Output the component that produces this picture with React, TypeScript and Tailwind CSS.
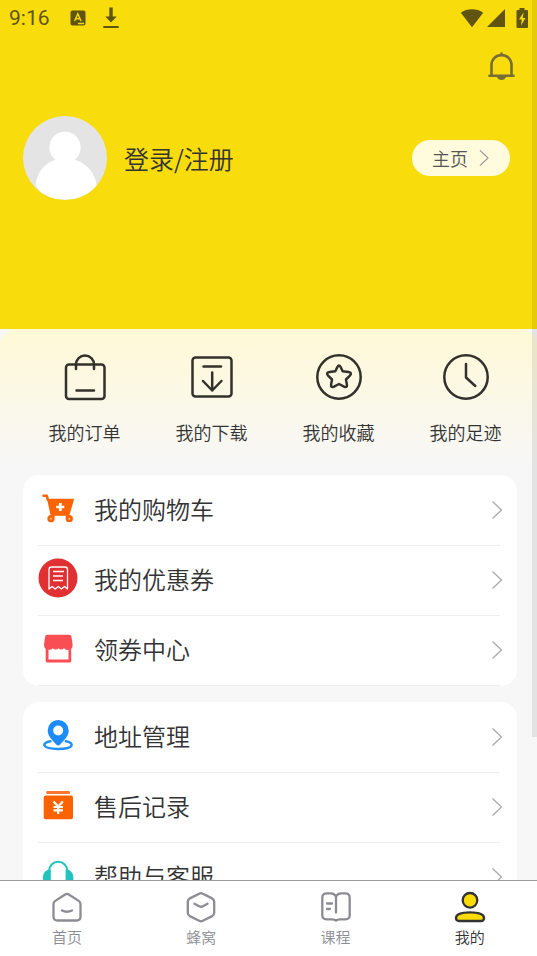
import type { ReactNode } from "react";

function Chevron({ className }: { className: string }) {
  return (
    <svg viewBox="0 0 12 20" className={className} fill="none" stroke="currentColor" strokeWidth="1.3" aria-hidden="true">
      <path d="M1.5 1.5 10.5 10 1.5 18.5" />
    </svg>
  );
}

function StatusBar() {
  return (
    <div className="flex h-9 items-center justify-between pl-[9px] pr-[9px] text-[#5f5511]">
      <div className="flex items-center">
        <span className="font-[Roboto,sans-serif] text-[21px] font-normal leading-9">9:16</span>
        <svg viewBox="0 0 16 16" className="ml-5 h-4 w-4" aria-hidden="true">
          <rect x="0.5" y="0.5" width="15" height="15" rx="2" fill="currentColor" />
          <path d="M4.6 11 7.8 3.8 11 11M5.8 8.8h4M8 13.6h6" fill="none" stroke="#f2d80c" strokeWidth="1.5" />
        </svg>
        <svg viewBox="0 0 16 22" className="ml-[17px] h-[22px] w-4" fill="currentColor" aria-hidden="true">
          <path d="M6.3 0.5h3.4v9h4L8 15.4 2.3 9.500h4zM0.300 19h15.400v2H0.300z" />
        </svg>
      </div>
      <div className="flex items-center">
        <svg viewBox="0 0 24 20" className="h-5 w-6" fill="currentColor" aria-hidden="true">
          <path d="M12 19.200 0.800 4.700C4 2.300 7.800 1.200 12 1.200s8 1.100 11.200 3.500z" />
        </svg>
        <svg viewBox="0 0 18 18" className="ml-[3px] h-[18px] w-[18px]" fill="currentColor" aria-hidden="true">
          <path d="M18 0v18H0z" />
        </svg>
        <svg viewBox="0 0 12 20" className="ml-[11px] h-5 w-3" aria-hidden="true">
          <path d="M3.500 0h5v2H11a1 1 0 0 1 1 1v16a1 1 0 0 1-1 1H1.500a1 1 0 0 1-1-1V3a1 1 0 0 1 1-1h2z" fill="currentColor" />
          <path d="M7.500 4.500 3 11.500h2.800L5 17.500l4.500-7.500H6.700z" fill="#f9dc0c" />
        </svg>
      </div>
    </div>
  );
}

function Avatar() {
  return (
    <svg viewBox="0 0 84 84" className="h-[84px] w-[84px] shrink-0 rounded-full bg-[#e4e4e4]" aria-hidden="true">
      <path
        d="M42 15.500a16 16 0 0 1 10 28.300C65 48 72.500 58 74 71L62 83.500H22L12.500 69C14 57 21 47.500 32 43.800a16 16 0 0 1 10-28.300z"
        fill="#fff"
      />
    </svg>
  );
}

const shortcuts: { label: string; icon: ReactNode }[] = [
  {
    label: "我的订单",
    icon: (
      <>
        <rect x="5" y="11.500" width="38.500" height="34.500" rx="3" />
        <path d="M15 16v-4.500a9 9 0 0 1 18 0V16M15.500 37.500h17.500" />
      </>
    ),
  },
  {
    label: "我的下载",
    icon: (
      <>
        <rect x="4.500" y="4.500" width="39" height="39" rx="3" />
        <path d="M15.500 13.500h17.500M24.200 19.500v18M15 28l9.200 9.500 9.200-9.500" />
      </>
    ),
  },
  {
    label: "我的收藏",
    icon: (
      <>
        <circle cx="24" cy="24" r="21.700" />
        <path d="M20.300 18.300 22.500 13.800Q24 11 25.500 13.800L27.700 18.300 33.500 19.100Q37.500 19.800 34.900 22.600L31 26.500 31.900 31.600Q32.300 35 29 33.600L24 31 19 33.600Q15.700 35 16.100 31.600L17 26.500 13.100 22.600Q10.500 19.800 14.500 19.100z" />
      </>
    ),
  },
  {
    label: "我的足迹",
    icon: (
      <>
        <circle cx="24" cy="24" r="21.700" />
        <path d="M24 11v13.500l9.300 8.500" />
      </>
    ),
  },
];

const groups: { label: string; icon: ReactNode }[][] = [
  [
    {
      label: "我的购物车",
      icon: (
        <>
          <path d="M5.500 7.700h3.200l1.200 4.100" fill="none" stroke="#fb6404" strokeWidth="2.500" strokeLinecap="round" />
          <path d="M9 10.700h27.200l-4.700 16.300-1.400.700v2H13.800v-2.200l-1.200-.300z" fill="#fb6404" />
          <path d="M16.500 27.800h11.300v4H16.500z" fill="#fff" />
          <circle cx="13" cy="30.700" r="3.600" fill="#fb6404" />
          <circle cx="31.300" cy="30.700" r="3.600" fill="#fb6404" />
          <circle cx="13" cy="30.700" r="1" fill="#ffc48f" />
          <circle cx="31.300" cy="30.700" r="1" fill="#ffc48f" />
          <path d="M22.300 15v8M18.300 19h8" stroke="#fff" strokeWidth="2.700" />
        </>
      ),
    },
    {
      label: "我的优惠券",
      icon: (
        <>
          <circle cx="20" cy="20" r="19.500" fill="#e03031" />
          <path
            d="M11 31V11.500a2.500 2.500 0 0 1 2.500-2.500h13.500a2.500 2.500 0 0 1 2.500 2.500V31l-3-2.500-3.100 2.500-3.100-2.500-3.100 2.500-3.100-2.500zM15 13.500h11M15 18h10M15 22.500h10"
            fill="none"
            stroke="#fff"
            strokeWidth="1.300"
            strokeLinejoin="round"
          />
        </>
      ),
    },
    {
      label: "领券中心",
      icon: (
        <>
          <path
            fillRule="evenodd"
            d="M9.500 6.700h21.500q2 0 2.500 2l1.100 8q.2 3-1.400 4.300v11.900q0 1.600-1.600 1.600H9.400q-1.700 0-1.700-1.600V21Q5.800 19.500 6 16.700l1.100-8q.4-2 2.400-2zM10.500 21.800v9.800h20V21.800q-2.800.6-4.500-1.600-2.800 2.500-5.500 0-3 2.500-5.700 0-1.700 2-4.300 1.600z"
            fill="#fa4e55"
          />
        </>
      ),
    },
  ],
  [
    {
      label: "地址管理",
      icon: (
        <>
          <path d="M12.500 26.200C3.500 27.500 3 34 20 34s16.500-6.500 7.700-7.800" fill="none" stroke="#2090fa" strokeWidth="2.400" strokeLinecap="round" />
          <path
            fillRule="evenodd"
            d="M20.200 5a10.500 10.500 0 0 1 10.500 10.500c0 5.500-4.500 9.500-8.500 14q-2 2-4 0c-4-4.500-8.500-8.500-8.500-14A10.500 10.500 0 0 1 20.200 5zM20.200 10.500a5 5 0 1 0 0 10 5 5 0 0 0 0-10z"
            fill="#1d8bfb"
          />
        </>
      ),
    },
    {
      label: "售后记录",
      icon: (
        <>
          <rect x="8.300" y="6" width="23.700" height="3" rx="1" fill="#fb7630" />
          <rect x="5.700" y="10.600" width="29.300" height="23.600" rx="2" fill="#fb6202" />
          <path d="m15.500 16.500 4.700 5 4.700-5M15.500 22h9.400M15.500 25.300h9.400M20.200 21.500v7.500" fill="none" stroke="#fff" strokeWidth="2.200" />
        </>
      ),
    },
    {
      label: "帮助与客服",
      icon: (
        <>
          <path d="M11 22v-6a9.200 9.200 0 0 1 18.400 0v6" fill="none" stroke="#20c3bd" strokeWidth="2" />
          <path d="M12.800 14.500v17c-5 0-7.800-3-7.800-8.500s3-8.500 7.800-8.500zM27.600 14.500v17c5 0 7.800-3 7.800-8.500s-3-8.500-7.800-8.500z" fill="#20c3bd" />
        </>
      ),
    },
  ],
];

const tabs: { label: string; active?: boolean; icon: ReactNode }[] = [
  {
    label: "首页",
    icon: (
      <>
        <path d="M14.200 3.500q1.800-1.200 3.600 0l9.900 6.400q1.800 1.200 1.800 3.100v12.500q0 4-4 4h-19q-4 0-4-4V13q0-1.900 1.800-3.100z" />
        <path d="M11 19.500q5 2.500 10 0" />
      </>
    ),
  },
  {
    label: "蜂窝",
    icon: (
      <>
        <path d="M14.200 2.700q1.800-1 3.600 0l9.400 4.700q2 1.100 2 3.200v11.300q0 2-2 3.200l-9.400 4.700q-1.800 1-3.600 0l-9.400-4.700q-2-1.100-2-3.200V10.600q0-2.100 2-3.200z" />
        <path d="m9.500 12.800 5 2.600q1.500.700 3 0l5-2.600" />
      </>
    ),
  },
  {
    label: "课程",
    icon: (
      <>
        <path d="M16 5.500q-1.500-3.200-5-3.200H6.700q-4.400 0-4.400 4.400v17.600q0 4 4.400 4h5.600q2.200 0 3.700 1.400 1.500-1.400 3.700-1.400h5.600q4.400 0 4.400-4V6.700q0-4.400-4.400-4.400H21q-3.500 0-5 3.200zM16 5.500v16" />
        <path d="M7 12.500h5M7 18h3" />
      </>
    ),
  },
  {
    label: "我的",
    active: true,
    icon: (
      <>
        <circle cx="16" cy="9.300" r="7.300" />
        <path d="M2 27q0-5.700 14-5.700t14 5.700q0 3-3 3H5q-3 0-3-3z" />
      </>
    ),
  },
];

export default function App() {
  return (
    <div className="relative flex h-screen flex-col overflow-hidden bg-[#f7f7f7] font-['Noto_Sans_CJK_SC',sans-serif] font-[350] text-[#333]">
      <main className="min-h-0 flex-1 overflow-hidden">
        <header className="bg-[#f9dc0c] pb-[129px]">
          <StatusBar />
          <div className="flex justify-end pr-5 pt-[14px]">
            <button type="button" aria-label="消息" className="h-8 w-8">
              <svg viewBox="0 0 32 32" className="h-8 w-8" fill="none" stroke="#766e35" strokeWidth="2.600" strokeLinecap="round" aria-hidden="true">
                <path d="M16.500 3.500v2M6.500 25.500V15a10 10 0 0 1 20 0v10.500M4.500 25.800h24" />
                <path d="M12 27h9q-1.200 3-4.500 3T12 27z" fill="#766e35" stroke="none" />
              </svg>
            </button>
          </div>
          <div className="mt-[34px] flex items-center pl-[23px] pr-[27px]">
            <Avatar />
            <button type="button" className="ml-[17px] text-[25px] leading-9">登录/注册</button>
            <button type="button" className="ml-auto flex h-9 w-[98px] items-center justify-center gap-2.5 rounded-full bg-[#fffbdc] text-lg text-[#555]">
              主页
              <Chevron className="h-[18px] w-3 text-[#999]" />
            </button>
          </div>
        </header>

        <section className="rounded-t-2xl bg-gradient-to-b from-[#fff9d6] to-[#f7f7f7] to-95% pb-[30px] pl-[21px] pr-2 pt-6">
          <div className="grid grid-cols-4">
            {shortcuts.map((item) => (
              <button key={item.label} type="button" className="flex flex-col items-center">
                <svg viewBox="0 0 48 48" className="h-12 w-12" fill="none" stroke="#33312c" strokeWidth="2.500" strokeLinecap="round" strokeLinejoin="round" aria-hidden="true">
                  {item.icon}
                </svg>
                <span className="mt-[18px] text-lg leading-[26px]">{item.label}</span>
              </button>
            ))}
          </div>
        </section>

        <div className="flex flex-col gap-4 pl-[23px] pr-5">
          {groups.map((group) => (
            <ul key={group[0].label} className="rounded-2xl bg-white pl-[15px] pr-[14px] pt-px">
              {group.map((item) => (
                <li key={item.label}>
                  <button type="button" className="flex h-[69px] w-full items-center pb-[3px]">
                    <svg viewBox="0 0 40 40" className="mb-0.5 h-10 w-10" aria-hidden="true">
                      {item.icon}
                    </svg>
                    <span className="ml-4 text-2xl leading-9">{item.label}</span>
                    <Chevron className="ml-auto mt-0.5 h-5 w-3 text-[#aaa]" />
                  </button>
                  <div className="mr-[3px] h-px bg-[#eee]" />
                </li>
              ))}
            </ul>
          ))}
        </div>
      </main>

      <nav className="grid h-[76px] shrink-0 grid-cols-4 border-t border-[#999] bg-white">
        {tabs.map((tab) => (
          <a
            key={tab.label}
            href="#"
            aria-current={tab.active ? "page" : undefined}
            className={tab.active ? "flex flex-col items-center pt-2.5 text-[#333]" : "flex flex-col items-center pt-2.5 text-[#8c8c94]"}
          >
            <svg
              viewBox="0 0 32 32"
              className={tab.active ? "h-8 w-8 fill-[#fbdc06]" : "h-8 w-8 fill-none"}
              stroke="currentColor"
              strokeWidth="2.300"
              strokeLinecap="round"
              strokeLinejoin="round"
              aria-hidden="true"
            >
              {tab.icon}
            </svg>
            <span className="mt-1 text-[15px] leading-5">{tab.label}</span>
          </a>
        ))}
      </nav>

      <div className="absolute right-0 top-0 h-[737px] w-[5px] bg-black/8" />
    </div>
  );
}
